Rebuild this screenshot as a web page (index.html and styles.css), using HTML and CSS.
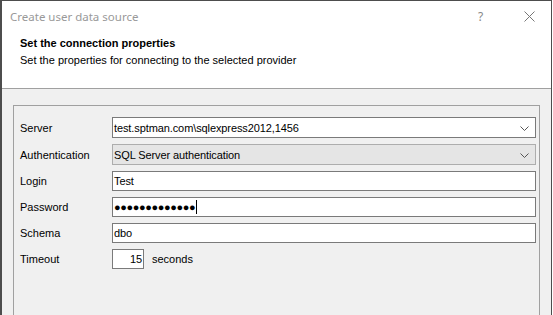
FILE: index.html
```html
<!DOCTYPE html>
<html>
<head>
<meta charset="utf-8">
<link rel="stylesheet" href="styles.css">
</head>
<body>
<div class="window">
  <div class="titlebar">
    <span class="title">Create user data source</span>
    <span class="help">?</span>
    <span class="close">
      <svg width="11" height="11" viewBox="0 0 11 11"><path d="M0.5 0.5L10.5 10.5M10.5 0.5L0.5 10.5" stroke="#777" stroke-width="1" fill="none"/></svg>
    </span>
  </div>
  <div class="header">
    <div class="h-title">Set the connection properties</div>
    <div class="h-sub">Set the properties for connecting to the selected provider</div>
  </div>
  <div class="content">
    <div class="group">
      <div class="form">
        <label class="lbl">Server</label>
        <div class="combo"><span class="val">test.sptman.com\sqlexpress2012,1456</span><svg class="chev" width="9" height="5" viewBox="0 0 9 5"><path d="M0.5 0.5L4.5 4.5L8.5 0.5" stroke="#555" stroke-width="1" fill="none"/></svg></div>

        <label class="lbl">Authentication</label>
        <div class="combo disabled"><span class="val">SQL Server authentication</span><svg class="chev" width="9" height="5" viewBox="0 0 9 5"><path d="M0.5 0.5L4.5 4.5L8.5 0.5" stroke="#555" stroke-width="1" fill="none"/></svg></div>

        <label class="lbl">Login</label>
        <div class="text"><span class="val">Test</span></div>

        <label class="lbl">Password</label>
        <div class="text"><span class="val dots">●●●●●●●●●●●●●</span><span class="caret"></span></div>

        <label class="lbl">Schema</label>
        <div class="text"><span class="val">dbo</span></div>

        <label class="lbl">Timeout</label>
        <div class="timeout">
          <div class="text num"><span class="val">15</span></div>
          <span class="unit">seconds</span>
        </div>
      </div>
    </div>
  </div>
</div>
</body>
</html>
```

FILE: styles.css
```css
html, body {
  margin: 0;
  padding: 0;
  background: #ffffff;
}
body {
  width: 553px;
  height: 315px;
  overflow: hidden;
  font-family: "Liberation Sans", Arial, sans-serif;
  font-size: 11px;
  color: #000;
}
.window {
  box-sizing: border-box;
  width: 552px;
  height: 315px;
  border: 1px solid #4d4d4d;
  border-left-width: 2px;
  border-bottom: none;
  display: flex;
  flex-direction: column;
  background: #fff;
  overflow: hidden;
}
.titlebar {
  height: 31px;
  display: flex;
  align-items: center;
  padding-left: 8px;
  flex: none;
}
.title {
  font-family: "Noto Sans", "Open Sans", sans-serif;
  font-size: 11.5px;
  color: #999;
  flex: 1;
  margin-top: -1px;
}
.help {
  font-family: "Noto Sans", sans-serif;
  font-size: 12px;
  color: #888;
  width: 10px;
  margin-right: 36px;
}
.close {
  width: 11px;
  height: 11px;
  margin-right: 16px;
  display: flex;
}
.header {
  height: 57px;
  box-sizing: border-box;
  padding: 4px 0 0 18px;
  border-bottom: 1px solid #a0a0a0;
  flex: none;
}
.h-title {
  font-weight: bold;
  line-height: 15px;
}
.h-sub {
  line-height: 15px;
  margin-top: 2px;
}
.content {
  flex: 1;
  min-height: 0;
  background: #f0f0f0;
  padding: 16px 0 0 11px;
}
.group {
  width: 527px;
  box-sizing: border-box;
  height: 100%;
  border: 1px solid #a0a0a0;
  border-bottom: none;
  padding: 11px 3px 0 6px;
}
.form {
  display: grid;
  grid-template-columns: 92px 424px;
  row-gap: 6px;
  align-items: center;
}
.lbl {
  white-space: nowrap;
}
.combo, .text {
  box-sizing: border-box;
  height: 20px;
  border: 1px solid #7a7a7a;
  background: #fff;
  display: flex;
  align-items: center;
  padding-left: 1px;
  position: relative;
}
.combo {
  height: 21px;
}
.combo.disabled {
  background: #e5e5e5;
  border-color: #adadad;
}
.val {
  white-space: nowrap;
  letter-spacing: -0.1px;
}
.chev {
  position: absolute;
  right: 6px;
  top: 8px;
}
.dots {
  font-size: 11px;
  letter-spacing: -0.4px;
}
.caret {
  display: inline-block;
  width: 1px;
  height: 14px;
  background: #000;
  margin-left: 1px;
}
.timeout {
  display: flex;
  align-items: center;
}
.num {
  width: 32px;
  justify-content: flex-end;
  padding-right: 1px;
}
.unit {
  margin-left: 8px;
}
```
